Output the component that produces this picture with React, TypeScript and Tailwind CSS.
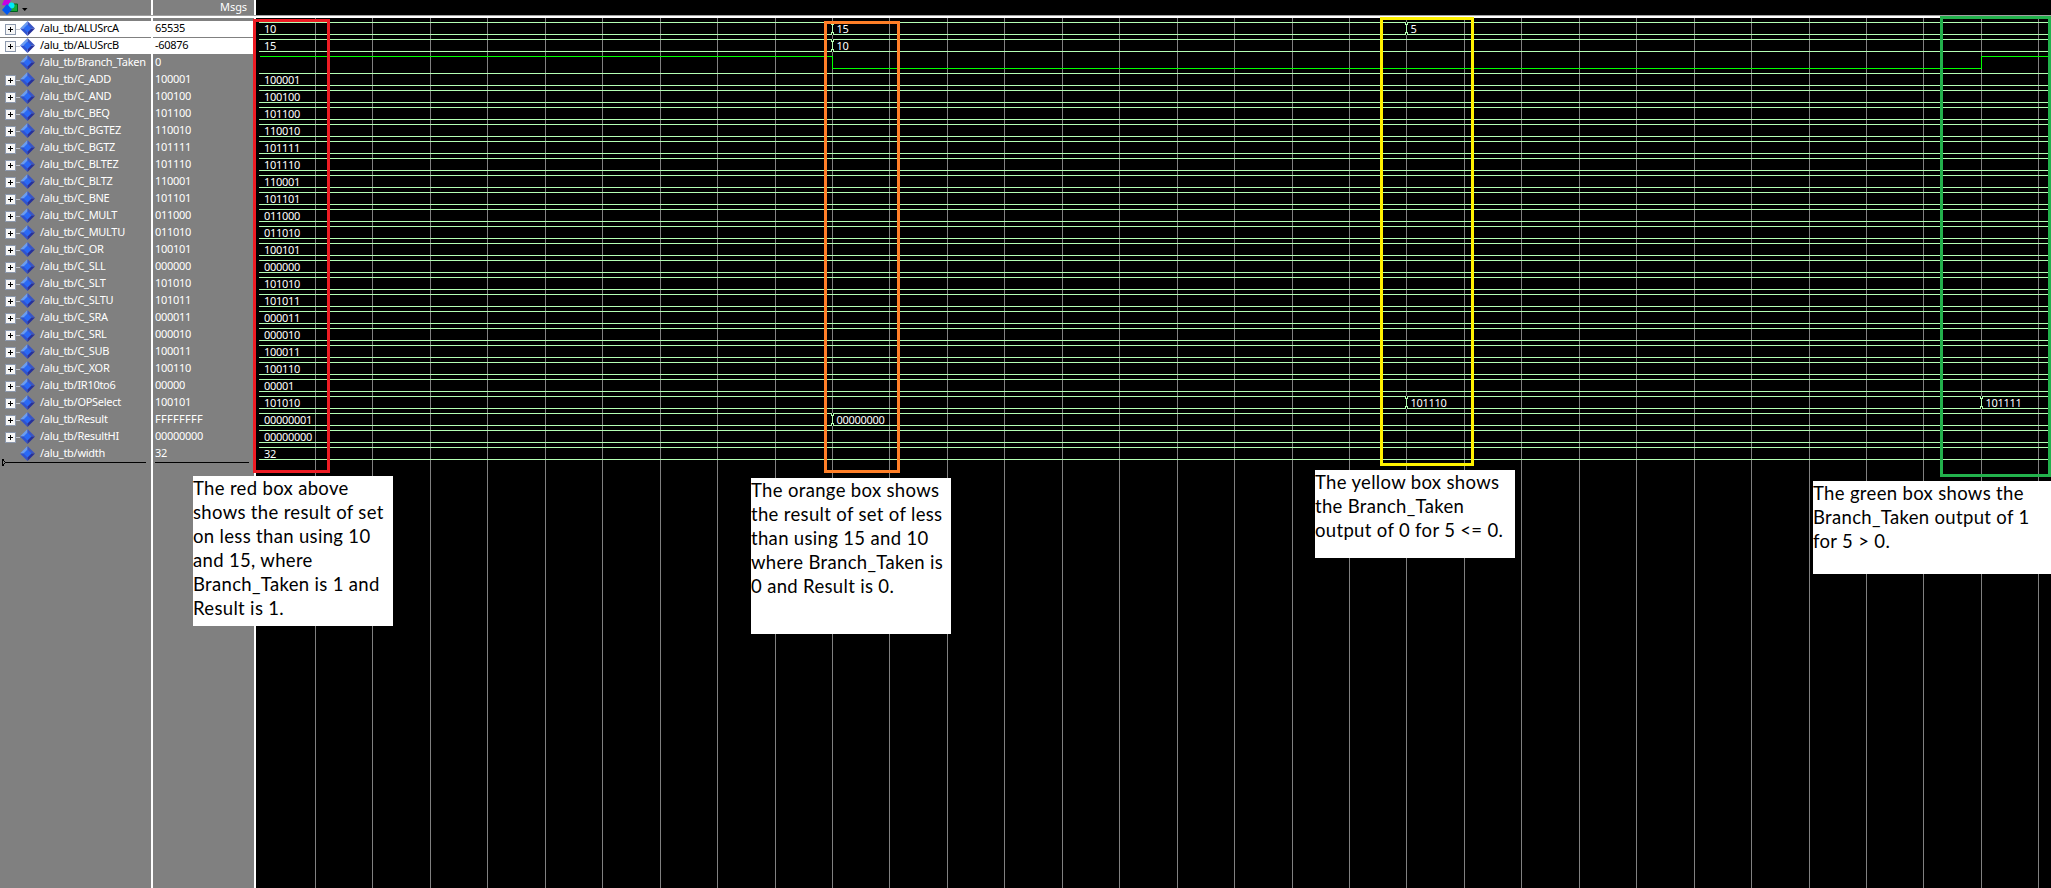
import React from "react";

const signals: [string, string, string, boolean][] = [
  ["ALUSrcA", "65535", "10", true],
  ["ALUSrcB", "-60876", "15", true],
  ["Branch_Taken", "0", "", false],
  ["C_ADD", "100001", "100001", true],
  ["C_AND", "100100", "100100", true],
  ["C_BEQ", "101100", "101100", true],
  ["C_BGTEZ", "110010", "110010", true],
  ["C_BGTZ", "101111", "101111", true],
  ["C_BLTEZ", "101110", "101110", true],
  ["C_BLTZ", "110001", "110001", true],
  ["C_BNE", "101101", "101101", true],
  ["C_MULT", "011000", "011000", true],
  ["C_MULTU", "011010", "011010", true],
  ["C_OR", "100101", "100101", true],
  ["C_SLL", "000000", "000000", true],
  ["C_SLT", "101010", "101010", true],
  ["C_SLTU", "101011", "101011", true],
  ["C_SRA", "000011", "000011", true],
  ["C_SRL", "000010", "000010", true],
  ["C_SUB", "100011", "100011", true],
  ["C_XOR", "100110", "100110", true],
  ["IR10to6", "00000", "00001", true],
  ["OPSelect", "100101", "101010", true],
  ["Result", "FFFFFFFF", "00000001", true],
  ["ResultHI", "00000000", "00000000", true],
  ["width", "32", "32", false],
];

// [row, x, label] of each value change
const changes: [number, number, string][] = [
  [0, 832, "15"],
  [1, 832, "10"],
  [23, 832, "00000000"],
  [0, 1406, "5"],
  [22, 1406, "101110"],
  [22, 1981, "101111"],
];

// The waveform pane starts at this x; all wave x values are in window pixels.
const LEFT = 256;
const TOP = 18;
const gridLines = Array.from({ length: 31 }, (_, n) => Math.round(831.95 + 57.445 * (n - 9)));

function Diamond() {
  return (
    <svg width="15" height="15" viewBox="0 0 15 15" className="shrink-0">
      <path d="M7.5 0L7.5 7.5L0 7.5Z" fill="#6b9cf0" />
      <path d="M7.5 0L15 7.5L7.5 7.5Z" fill="#3a55c4" />
      <path d="M0 7.5L7.5 7.5L7.5 15Z" fill="#2f52cf" />
      <path d="M15 7.5L7.5 15L7.5 7.5Z" fill="#27309a" />
      <path d="M7.5 3.5L11.5 7.5L7.5 11.5L3.5 7.5Z" fill="#2a69f5" />
    </svg>
  );
}

function Expander() {
  return (
    <svg width="15" height="11" viewBox="0 0 15 11" shapeRendering="crispEdges" className="mt-[3px] shrink-0">
      <rect x="0" y="0" width="11" height="11" fill="#8d99ad" />
      <rect x="1" y="1" width="9" height="9" fill="#f6f6f6" />
      <rect x="3" y="5" width="5" height="1" fill="#000" />
      <rect x="5" y="3" width="1" height="5" fill="#000" />
      <rect x="11" y="5" width="4" height="1" fill="#c0c4cc" />
    </svg>
  );
}

function Note({ lines, className }: { lines: string[]; className: string }) {
  return (
    <div
      className={`absolute whitespace-nowrap bg-white font-[Lato,sans-serif] text-[18.5px] leading-[24px] tracking-[0.33px] text-black ${className}`}
    >
      {lines.map((l) => (
        <div key={l}>{l}</div>
      ))}
    </div>
  );
}

function Waves() {
  return (
    <svg width="1795" height="870" viewBox={`${LEFT} ${TOP} 1795 870`} className="block">
      <g shapeRendering="crispEdges">
        {gridLines.map((x) => (
          <rect key={x} x={x} y={TOP} width="1" height="870" fill="#808080" />
        ))}
        {signals.map(([name], i) =>
          name === "Branch_Taken" ? (
            <path
              key={name}
              d="M260 56.5H832.5V68.5H1981.5V56.5H2051"
              fill="none"
              stroke="#00ff00"
            />
          ) : (
            <path
              key={name}
              d={`M259 ${22.5 + 17 * i}H2051M259 ${34.5 + 17 * i}H2051`}
              stroke="#b4ffb4"
            />
          ),
        )}
        {changes.map(([row, x, label]) => {
          const y = 22 + 17 * row;
          return (
            <g key={`${row}-${x}-${label}`}>
              <rect x={x - 1} y={y} width="3" height="13" fill="#000" />
              <path
                d={`M${x - 0.5} ${y}v3M${x + 1.5} ${y}v3M${x + 0.5} ${y + 2}v9M${x - 0.5} ${y + 10}v3M${x + 1.5} ${y + 10}v3`}
                stroke="#b4ffb4"
              />
            </g>
          );
        })}
      </g>
      <g className="fill-white font-[Noto_Sans,sans-serif] text-[11px] tracking-[-0.3px]">
        {signals.map(([name, , v], i) => (
          <text key={name} x="264" y={33 + 17 * i}>
            {v}
          </text>
        ))}
        {changes.map(([row, x, label]) => (
          <text key={`${row}-${x}`} x={x + 4.5} y={33 + 17 * row}>
            {label}
          </text>
        ))}
      </g>
    </svg>
  );
}

export default function App() {
  return (
    <div className="relative flex h-[888px] w-[2051px] flex-col overflow-hidden bg-black font-[Noto_Sans,sans-serif] text-[11px] text-white">
      <header className="flex h-[15px] shrink-0">
        <div className="flex w-[151px] bg-[#808080]">
          <svg width="30" height="15" viewBox="0 0 30 15">
            <path d="M4 0H11L8 6L2 5Z" fill="#c800e0" />
            <path d="M10 4H17.500V11.500H10Z" fill="#18a838" stroke="#006020" />
            <circle cx="11.500" cy="5.500" r="3" fill="#00e8f8" />
            <path d="M7 4L12 9.500L7 15L2 10Z" fill="#0058f0" />
            <path d="M22 8H27.500L24.750 11Z" fill="#000" />
          </svg>
        </div>
        <div className="w-[2px] bg-white" />
        <div className="w-[101px] bg-[#808080] pr-[7px] text-right leading-[14px] tracking-[-0.1px]">Msgs</div>
        <div className="w-[2px] bg-white" />
      </header>
      <div className="h-[3px] shrink-0 border-t border-[#a0a0a0] bg-white" />
      <main className="flex min-h-0 flex-1">
        <div className="w-[151px] bg-[#808080] pt-[3px]">
          {signals.map(([name, , , expandable], i) => (
            <div
              key={name}
              className={`flex h-[17px] items-start pl-[5px] ${i < 2 ? "border-b border-[#808080] bg-white text-black" : ""}`}
            >
              <div className="w-[15px]">{expandable && <Expander />}</div>
              <Diamond />
              <span className="ml-[5px] whitespace-nowrap leading-[13px] tracking-[-0.28px]">/alu_tb/{name}</span>
            </div>
          ))}
          <svg width="151" height="7" viewBox="0 0 151 7" className="-mt-[4px] block" shapeRendering="crispEdges">
            <path d="M2.500 0V7L5.500 3.500Z" fill="none" stroke="#000" />
            <path d="M5 3.500H146" stroke="#000" />
          </svg>
        </div>
        <div className="w-[2px] bg-white" />
        <div className="w-[101px] bg-[#808080] pt-[3px]">
          {signals.map(([name, value], i) => (
            <div
              key={name}
              className={`h-[17px] pl-[2px] leading-[13px] ${value[0] === "F" ? "tracking-[0.3px]" : "tracking-[-0.3px]"} ${i < 2 ? "border-b border-[#808080] bg-white text-black" : ""}`}
            >
              {value}
            </div>
          ))}
          <div className="-mt-px ml-[2px] h-px w-[94px] bg-black" />
        </div>
        <div className="w-[2px] bg-white" />
        <Waves />
      </main>

      <div className="absolute left-[253px] top-[19px] h-[454px] w-[77px] border-[3px] border-[#ed1c24]" />
      <div className="absolute left-[824px] top-[21px] h-[452px] w-[76px] border-[3px] border-[#ff7f27]" />
      <div className="absolute left-[1380px] top-[17px] h-[449px] w-[94px] border-[3px] border-[#fff200]" />
      <div className="absolute left-[1940px] top-[16px] h-[461px] w-[111px] border-[3px] border-[#22b14c]" />

      <Note
        className="left-[193px] top-[476px] h-[150px] w-[200px]"
        lines={["The red box above", "shows the result of set", "on less than using 10", "and 15, where", "Branch_Taken is 1 and", "Result is 1."]}
      />
      <Note
        className="left-[751px] top-[478px] h-[156px] w-[200px]"
        lines={["The orange box shows", "the result of set of less", "than using 15 and 10", "where Branch_Taken is", "0 and Result is 0."]}
      />
      <Note
        className="left-[1315px] top-[470px] h-[88px] w-[200px]"
        lines={["The yellow box shows", "the Branch_Taken", "output of 0 for 5 <= 0."]}
      />
      <Note
        className="left-[1813px] top-[481px] h-[93px] w-[238px]"
        lines={["The green box shows the", "Branch_Taken output of 1", "for 5 > 0."]}
      />
    </div>
  );
}
